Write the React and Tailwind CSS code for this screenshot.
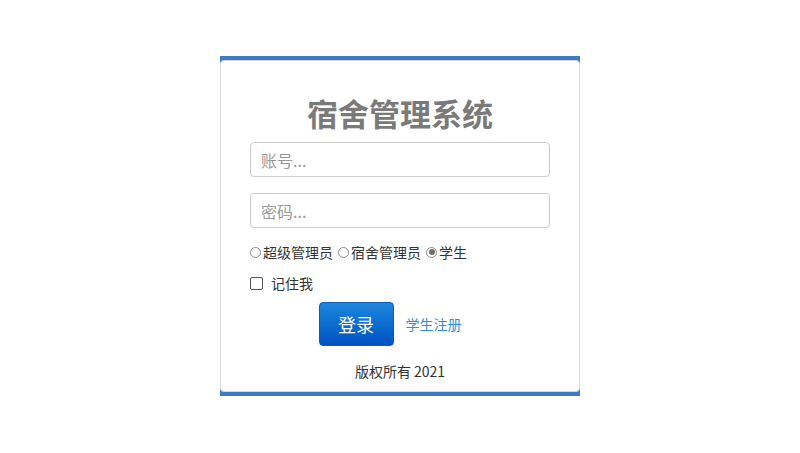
import React, { useState } from "react";

const font = { fontFamily: '"Noto Sans CJK SC", "Noto Sans", sans-serif' };

const roles = ["超级管理员", "宿舍管理员", "学生"];

const App = () => {
  const [role, setRole] = useState("学生");
  const [remember, setRemember] = useState(false);

  return (
    <div className="min-h-screen bg-white flex justify-center" style={font}>
      <div className="mt-[56px] w-[360px] h-fit bg-[#3a7dc2] py-[4px]">
        <div className="bg-white border border-[#d8d8d8] rounded-[4px] px-[29px] pt-[33px] pb-[10px] flex flex-col">
          {/* Title */}
          <h1 className="text-center text-[31px] leading-[38px] font-bold text-[#7a7a7a]">
            宿舍管理系统
          </h1>

          {/* Inputs */}
          <input
            type="text"
            placeholder="账号..."
            className="mt-[10px] h-[35px] w-full border border-[#cccccc] rounded-[4px] px-[10px] text-[16px] text-[#555] placeholder:text-[#999] outline-none"
          />
          <input
            type="password"
            placeholder="密码..."
            className="mt-[16px] h-[35px] w-full border border-[#cccccc] rounded-[4px] px-[10px] text-[16px] text-[#555] placeholder:text-[#999] outline-none"
          />

          {/* Roles */}
          <div className="mt-[14px] h-[20px] flex items-center gap-[5px] text-[14px] text-[#333]">
            {roles.map((r) => (
              <label key={r} className="flex items-center gap-[2px] cursor-pointer">
                <span className="w-[11px] h-[11px] rounded-full border border-[#8a8a8a] bg-white flex items-center justify-center">
                  {role === r && <span className="w-[6px] h-[6px] rounded-full bg-[#6f6f6f]" />}
                </span>
                <input
                  type="radio"
                  name="role"
                  className="hidden"
                  checked={role === r}
                  onChange={() => setRole(r)}
                />
                <span className="leading-[20px]">{r}</span>
              </label>
            ))}
          </div>

          {/* Remember me */}
          <label className="mt-[11px] h-[20px] flex items-center gap-[8px] text-[14px] text-[#333] cursor-pointer">
            <span className="w-[13px] h-[13px] border border-[#555] rounded-[2px] bg-white flex items-center justify-center text-[10px] leading-none">
              {remember ? "✓" : ""}
            </span>
            <input
              type="checkbox"
              className="hidden"
              checked={remember}
              onChange={() => setRemember(!remember)}
            />
            <span>记住我</span>
          </label>

          {/* Actions */}
          <div className="mt-[9px] flex items-center justify-center gap-[12px] pr-[20px]">
            <button className="w-[75px] h-[44px] rounded-[4px] bg-gradient-to-b from-[#1f86db] to-[#0052c2] border border-[#0a5bb8] text-white text-[18px]">
              登录
            </button>
            <a href="#" className="text-[14px] text-[#2f90d8]">
              学生注册
            </a>
          </div>

          {/* Footer */}
          <p className="mt-[15px] text-center text-[14px] leading-[20px] text-[#333]">
            版权所有 2021
          </p>
        </div>
      </div>
    </div>
  );
};

export default App;
